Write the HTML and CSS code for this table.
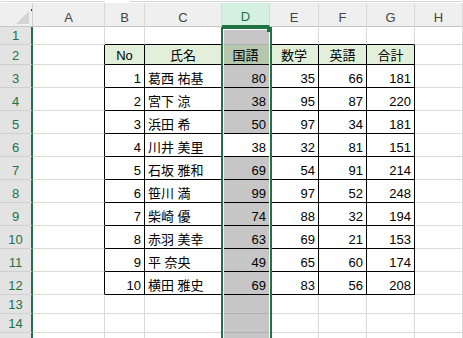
FILE: index.html
```html
<!DOCTYPE html>
<html lang="ja">
<head>
    <meta charset="UTF-8">
    <title>成績表</title>
    <link rel="stylesheet" href="styles.css">
</head>
<body>
<div class="topbar">
    <div class="box box-name"></div>
    <div class="box box-formula"></div>
</div>

<div class="sheet" id="sheet">
    <div class="corner">
        <svg width="14" height="14" viewBox="0 0 14 14"><polygon points="13,0 13,13 0,13" fill="#d4d4d4"/></svg>
    </div>
    <div class="selection"><span class="handle"></span></div>
</div>

<script>
    var cols = ["A", "B", "C", "D", "E", "F", "G", "H"];
    var heads = ["No", "氏名", "国語", "数学", "英語", "合計"];
    var students = [
        ["葛西 祐基", 80, 35, 66],
        ["宮下 涼", 38, 95, 87],
        ["浜田 希", 50, 97, 34],
        ["川井 美里", 38, 32, 81],
        ["石坂 雅和", 69, 54, 91],
        ["笹川 満", 99, 97, 52],
        ["柴崎 優", 74, 88, 32],
        ["赤羽 美幸", 63, 69, 21],
        ["平 奈央", 49, 65, 60],
        ["横田 雅史", 69, 83, 56]
    ];
    var ROWS = 15;
    var sheet = document.getElementById("sheet");

    function addCell(cls, text) {
        var d = document.createElement("div");
        d.className = cls;
        if (text !== undefined && text !== "") d.textContent = text;
        sheet.appendChild(d);
    }

    // column letters
    cols.forEach(function (c) {
        addCell("colhdr" + (c === "D" ? " sel" : ""), c);
    });

    for (var r = 1; r <= ROWS; r++) {
        // last row only peeks in at the bottom edge, its number stays below
        addCell("rowhdr", r < ROWS ? r : "");
        for (var c = 0; c < cols.length; c++) {
            var cls = "cell";
            var text = "";
            var inTable = r >= 2 && r <= 12 && c >= 1 && c <= 6;

            if (inTable) {
                cls += " tbl";
                if (r === 2) {
                    cls += " head";
                    text = heads[c - 1];
                } else {
                    var s = students[r - 3];
                    if (c === 1) { text = r - 2; cls += " num"; }
                    else if (c === 2) { text = s[0]; cls += " txt"; }
                    else if (c <= 5) { text = s[c - 2]; cls += " num"; }
                    else { text = s[1] + s[2] + s[3]; cls += " num"; }
                }
            }
            if (r === 1 && c >= 1 && c <= 6) cls += " above";
            if (c === 0 && r >= 2 && r <= 12) cls += " before";
            if (c === 3) cls += (r === 6 ? " active" : " colsel");

            addCell(cls, text);
        }
    }
</script>
</body>
</html>
```

FILE: styles.css
```css
body {
    margin: 0;
    background: #fff;
    overflow: hidden;
    font-family: "Liberation Sans", "Noto Sans CJK JP", sans-serif;
}

.topbar {
    height: 3px;
    display: flex;
    gap: 24px;
    background: #fff;
}

.box {
    height: 1px;
    border-bottom: 1px solid #d6d6d6;
    border-radius: 0 0 3px 3px;
}

.box-name {
    width: 105px;
}

.box-formula {
    flex: 1;
}

.sheet {
    position: relative;
    display: grid;
    grid-template-columns: 33px 72px 40px 77px 48px 49px 48px 48px 48px;
    grid-template-rows: 24px 18px 20px repeat(10, 23px) 19px 19px 19px;
    font-size: 13px;
    line-height: 16px;
}

.corner {
    background: #efefef;
    border-right: 1px solid #d0d0d0;
    border-bottom: 1px solid #c6c6c6;
    display: flex;
    align-items: flex-end;
    justify-content: flex-end;
    padding: 0 2px 1px 0;
    position: relative;
}

/* small tick at the top of the corner box */
.corner::after {
    content: "";
    position: absolute;
    right: 0;
    top: 6px;
    width: 1px;
    height: 2px;
    background: #333;
}

.colhdr {
    background: #efefef;
    color: #444;
    border-right: 1px solid #d9d9d9;
    border-bottom: 1px solid #c6c6c6;
    display: flex;
    justify-content: center;
    align-items: flex-end;
}

.colhdr.sel {
    background: #d3f0e0;
    color: #217346;
    border-bottom: 2px solid #217346;
}

.rowhdr {
    background: #e3e3e3;
    color: #217346;
    border-right: 2px solid #217346;
    border-bottom: 1px solid #cfcfcf;
    display: flex;
    justify-content: center;
    align-items: flex-end;
}

.cell {
    border-right: 1px solid #dadada;
    border-bottom: 1px solid #dadada;
    display: flex;
    align-items: flex-end;
    padding: 0 3px;
    white-space: nowrap;
    overflow: hidden;
    color: #000;
}

.cell.tbl {
    border-right-color: #000;
    border-bottom-color: #000;
}

.cell.above {
    border-bottom-color: #000;
}

.cell.before {
    border-right-color: #000;
}

.cell.head {
    background: #e2efda;
    justify-content: center;
}

.cell.num {
    justify-content: flex-end;
}

.cell.txt {
    justify-content: flex-start;
}

.cell.colsel {
    background: #c6c6c6;
    border-bottom-color: #b0b0b0;
}

.cell.colsel.tbl {
    border-bottom-color: #000;
}

.cell.colsel.head {
    background: #b5c7ac;
}

.cell.active {
    background: #fff;
}

/* selected column D */
.selection {
    position: absolute;
    left: 221px;
    top: 24px;
    width: 51px;
    bottom: 0;
    box-sizing: border-box;
    border: 2px solid #217346;
    box-shadow: inset 0 0 0 1px #fff;
    pointer-events: none;
}

.handle {
    position: absolute;
    top: -2px;
    right: -2px;
    width: 5px;
    height: 5px;
    background: #217346;
}
```
